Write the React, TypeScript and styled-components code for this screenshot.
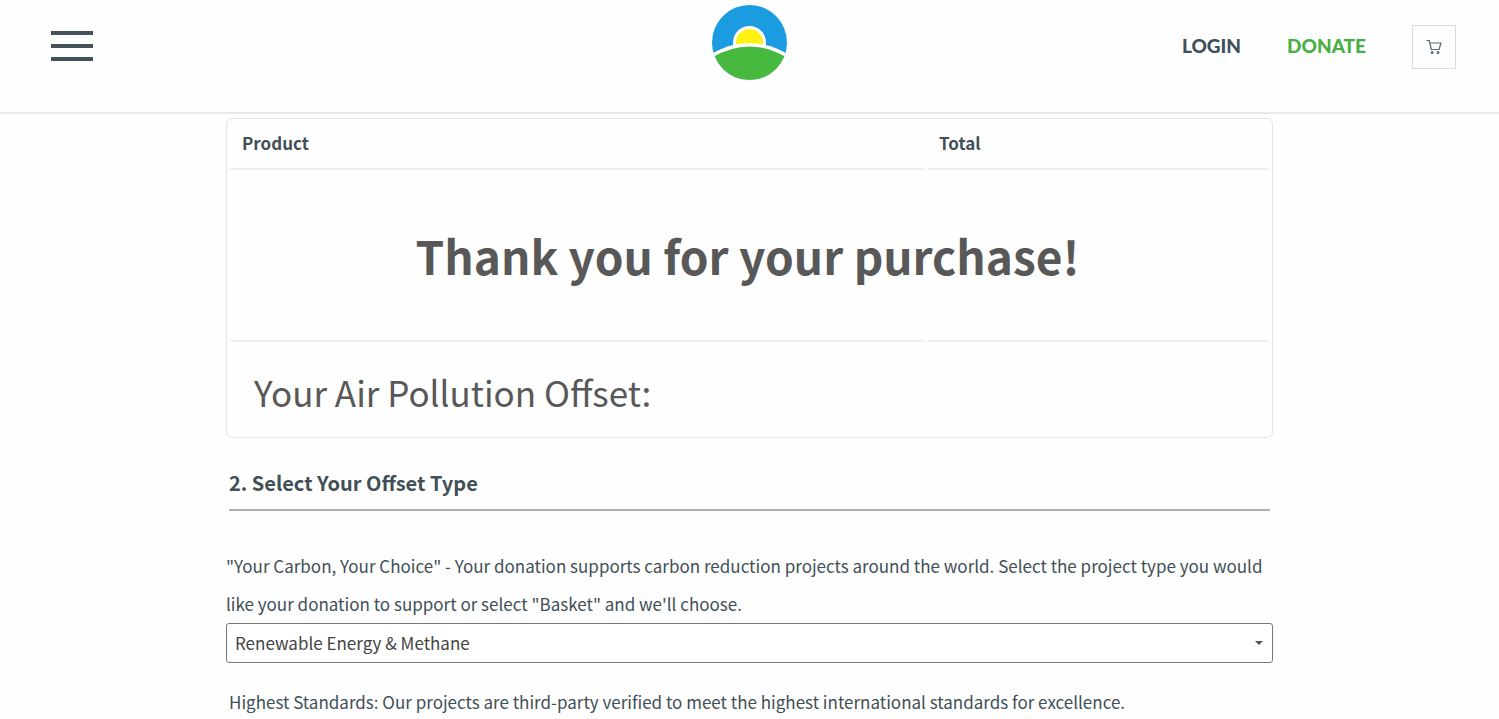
import React from "react";
import styled, { createGlobalStyle } from "styled-components";

const GlobalStyle = createGlobalStyle`
  *, *::before, *::after { box-sizing: border-box; }
  body {
    margin: 0;
    background: #fefefe;
    color: #414f57;
    font-family: "Noto Sans CJK SC", "Noto Sans", sans-serif;
    font-size: 17px;
    line-height: 38px;
  }
`;

const Header = styled.header`
  display: grid;
  grid-template-columns: 1fr auto 1fr;
  align-items: start;
  min-height: 114px;
  padding: 5px 43px 0;
  border-bottom: 2px solid #e8e8e8;
`;

const MenuButton = styled.button`
  display: flex;
  flex-direction: column;
  justify-content: space-between;
  width: 42px;
  height: 30px;
  margin: 26px 0 0 8px;
  padding: 0;
  border: 0;
  background: none;
  cursor: pointer;
`;

const MenuBar = styled.span`
  height: 4px;
  background: #435158;
`;

const LogoLink = styled.a`
  display: block;
  height: 75px;
`;

const Nav = styled.nav`
  display: flex;
  align-items: center;
  justify-content: flex-end;
  gap: 46px;
  margin-top: 20px;
`;

const NavLink = styled.a<{ $accent?: boolean }>`
  padding-bottom: 2px;
  color: ${(p) => (p.$accent ? "#46b042" : "#414f57")};
  font-family: Lato, sans-serif;
  font-size: 19px;
  font-weight: 900;
  line-height: 24px;
  text-decoration: none;
`;

const CartButton = styled.button`
  display: grid;
  place-items: center;
  width: 44px;
  height: 44px;
  padding: 0;
  border: 1px solid #dcdcdc;
  background: none;
  color: #5a666d;
  cursor: pointer;
`;

const Main = styled.main`
  width: 100%;
  max-width: 1047px;
  margin: 4px auto 0;
`;

const OrderTable = styled.table`
  width: 100%;
  table-layout: fixed;
  border: 1px solid #e6e6e6;
  border-radius: 6px;
  border-collapse: separate;
  border-spacing: 3px;
  text-align: left;
`;

const HeadCell = styled.th<{ $wide?: boolean }>`
  width: ${(p) => (p.$wide ? "67%" : "33%")};
  height: 48px;
  padding: 0 12px 4px;
  border-bottom: 2px solid #efefef;
  font-weight: 700;
  line-height: 24px;
`;

const ThanksCell = styled.td`
  height: 164px;
  padding: 0 4px 0 0;
  color: #585858;
  font-size: 46px;
  font-weight: 700;
  line-height: 64px;
  text-align: center;
`;

const OffsetCell = styled.td`
  height: 94px;
  padding: 8px 24px 0;
  border-top: 2px solid #efefef;
  color: #585858;
  font-size: 35px;
  line-height: 48px;
`;

const SectionTitle = styled.h2`
  margin: 29px 3px 36px;
  padding-bottom: 10px;
  border-bottom: 2px solid #b0b2b3;
  font-size: 20px;
  font-weight: 700;
  line-height: 32px;
`;

const Description = styled.label`
  display: block;
`;

const SelectBox = styled.div`
  position: relative;
`;

const OffsetSelect = styled.select`
  display: block;
  width: 100%;
  height: 40px;
  padding: 0 8px;
  appearance: none;
  border: 1px solid #777;
  border-radius: 3px;
  background: #fff;
  color: #444;
  font: inherit;
  line-height: 36px;
`;

const Caret = styled.svg`
  position: absolute;
  top: 18px;
  right: 10px;
  pointer-events: none;
`;

const Note = styled.p`
  margin: 20px 3px 0;
`;

const Logo = () => (
  <svg width="75" height="75" viewBox="0 0 75 75" role="img" aria-label="Home">
    <defs>
      <clipPath id="disc">
        <circle cx="37.5" cy="37.5" r="37.5" />
      </clipPath>
    </defs>
    <g clipPath="url(#disc)">
      <rect width="75" height="75" fill="#1b9ce0" />
      <circle cx="37.5" cy="37.5" r="16.5" fill="#fff" />
      <circle cx="37.5" cy="37.5" r="13.5" fill="#fff112" />
      <circle cx="37.5" cy="110.5" r="72.3" fill="#fff" />
      <path d="M0 52.5Q37.5 30.3 75 52.5V75H0Z" fill="#48b93f" />
      <path d="M0 46L3.4 50.2L0 56ZM75 46L71.6 50.2L75 56Z" fill="#fefefe" />
    </g>
  </svg>
);

const CartIcon = () => (
  <svg width="16" height="16" viewBox="0 0 16 16" fill="none" stroke="currentColor" strokeWidth="1.2" aria-hidden="true">
    <path d="M0.5 1.5H3.2L5.4 10.5H13L15 4H4" />
    <circle cx="6.2" cy="13.5" r="0.9" />
    <circle cx="12" cy="13.5" r="0.9" />
  </svg>
);

export default function App() {
  return (
    <>
      <GlobalStyle />
      <Header>
        <MenuButton aria-label="Menu">
          <MenuBar />
          <MenuBar />
          <MenuBar />
        </MenuButton>
        <LogoLink href="#">
          <Logo />
        </LogoLink>
        <Nav>
          <NavLink href="#login">LOGIN</NavLink>
          <NavLink href="#donate" $accent>DONATE</NavLink>
          <CartButton aria-label="Cart">
            <CartIcon />
          </CartButton>
        </Nav>
      </Header>
      <Main>
        <OrderTable>
          <thead>
            <tr>
              <HeadCell $wide>Product</HeadCell>
              <HeadCell>Total</HeadCell>
            </tr>
          </thead>
          <tbody>
            <tr>
              <ThanksCell colSpan={2}>Thank you for your purchase!</ThanksCell>
            </tr>
            <tr>
              <OffsetCell>Your Air Pollution Offset:</OffsetCell>
              <OffsetCell />
            </tr>
          </tbody>
        </OrderTable>
        <SectionTitle>2. Select Your Offset Type</SectionTitle>
        <Description htmlFor="offset-type">
          "Your Carbon, Your Choice" - Your donation supports carbon reduction projects around the world. Select the
          project type you would like your donation to support or select "Basket" and we'll choose.
        </Description>
        <SelectBox>
          <OffsetSelect id="offset-type" defaultValue="renewable">
            <option value="renewable">Renewable Energy &amp; Methane</option>
            <option value="basket">Basket</option>
          </OffsetSelect>
          <Caret width="8" height="4" viewBox="0 0 8 4" aria-hidden="true">
            <path d="M0 0H8L4 4Z" fill="#555" />
          </Caret>
        </SelectBox>
        <Note>
          Highest Standards: Our projects are third-party verified to meet the highest international standards for
          excellence.
        </Note>
      </Main>
    </>
  );
}
